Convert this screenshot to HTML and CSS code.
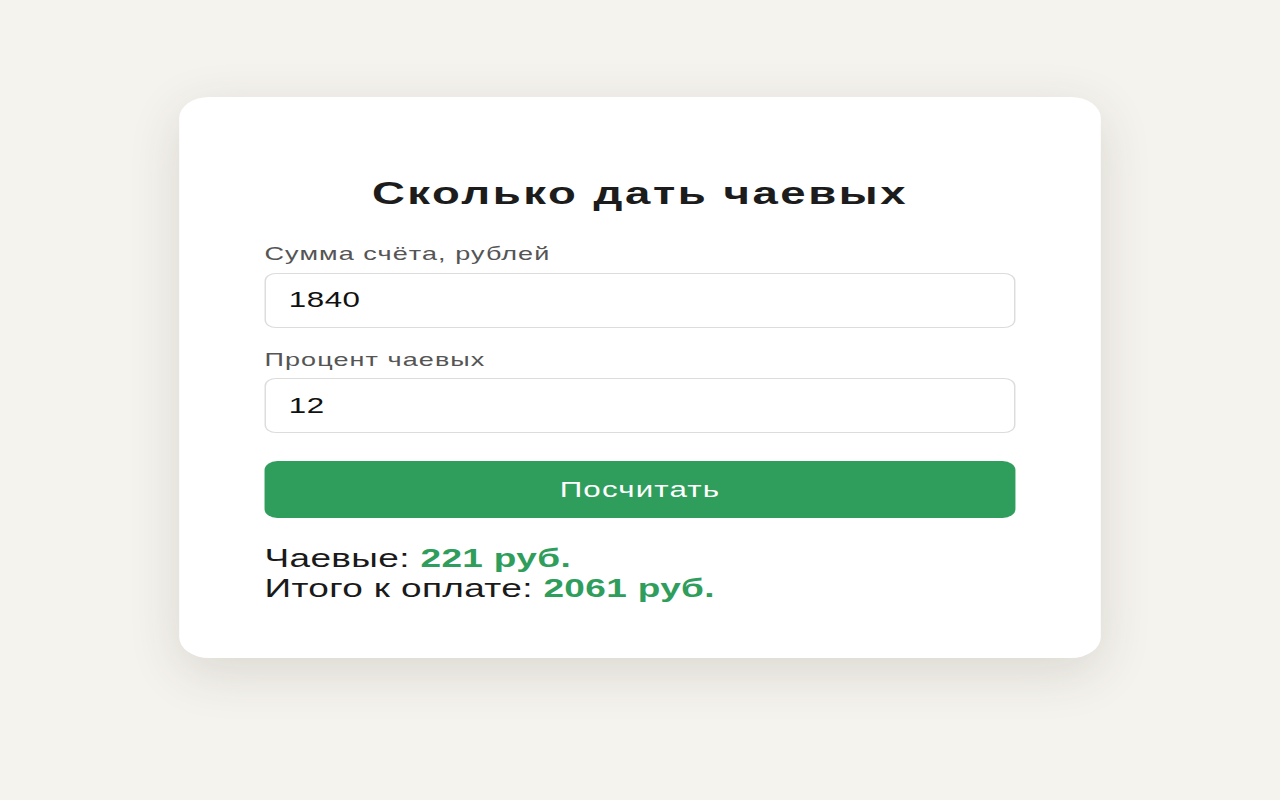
FILE: index.html
```html
<!DOCTYPE html>
<html lang="ru">
<head>
<meta charset="utf-8">
<title>Сколько дать чаевых</title>
<link rel="stylesheet" href="styles.css">
</head>
<body>
<div class="stage">
  <main class="card">
    <h1 class="title">Сколько дать чаевых</h1>
    <div class="field">
      <label class="label" for="bill">Сумма счёта, рублей</label>
      <input class="input" id="bill" type="text" value="1840">
    </div>
    <div class="field">
      <label class="label" for="pct">Процент чаевых</label>
      <input class="input" id="pct" type="text" value="12">
    </div>
    <button class="btn" type="button">Посчитать</button>
    <div class="result">
      <div>Чаевые: <strong class="accent">221 руб.</strong></div>
      <div>Итого к оплате: <strong class="accent">2061 руб.</strong></div>
    </div>
  </main>
</div>
</body>
</html>
```
FILE: styles.css
```css
html, body {
  margin: 0;
  padding: 0;
  height: 100%;
  overflow: hidden;
  background: #f5f3ee;
}
body {
  font-family: "Liberation Sans", Arial, Helvetica, sans-serif;
  color: #1a1a1a;
}
.stage {
  width: 900px;
  height: 800px;
  transform: scaleX(1.4222);
  transform-origin: 0 0;
  display: flex;
  justify-content: center;
  align-items: flex-start;
  padding-top: 97px;
  box-sizing: border-box;
}
.card {
  width: 648px;
  box-sizing: border-box;
  background: #ffffff;
  border-radius: 21px;
  padding: 78px 60px 55px;
  box-shadow: 0 14px 44px rgba(60, 50, 30, 0.14);
  display: flex;
  flex-direction: column;
}
.title {
  margin: 0 0 31px;
  font-size: 32px;
  line-height: 37px;
  letter-spacing: 1.8px;
  font-weight: 700;
  text-align: center;
  color: #1c1c1c;
}
.field {
  display: flex;
  flex-direction: column;
  gap: 8px;
  margin-bottom: 21px;
}
.label {
  font-size: 19px;
  line-height: 21.6px;
  letter-spacing: 0.75px;
  color: #555555;
}
.input {
  height: 55px;
  box-sizing: border-box;
  border: 1px solid #dcdcdc;
  border-radius: 8px;
  padding: 0 16px;
  font-family: inherit;
  font-size: 22px;
  letter-spacing: 0.4px;
  color: #111111;
  background: #ffffff;
  outline: none;
}
.btn {
  margin-top: 7px;
  height: 57px;
  border: none;
  border-radius: 9px;
  background: #2f9e5c;
  color: #ffffff;
  font-family: inherit;
  font-size: 22px;
  letter-spacing: 0.8px;
  cursor: pointer;
}
.result {
  margin-top: 25px;
  font-size: 26px;
  line-height: 30px;
  letter-spacing: 0.25px;
  color: #1a1a1a;
}
.accent {
  color: #2f9e5c;
  font-weight: 700;
}
```
